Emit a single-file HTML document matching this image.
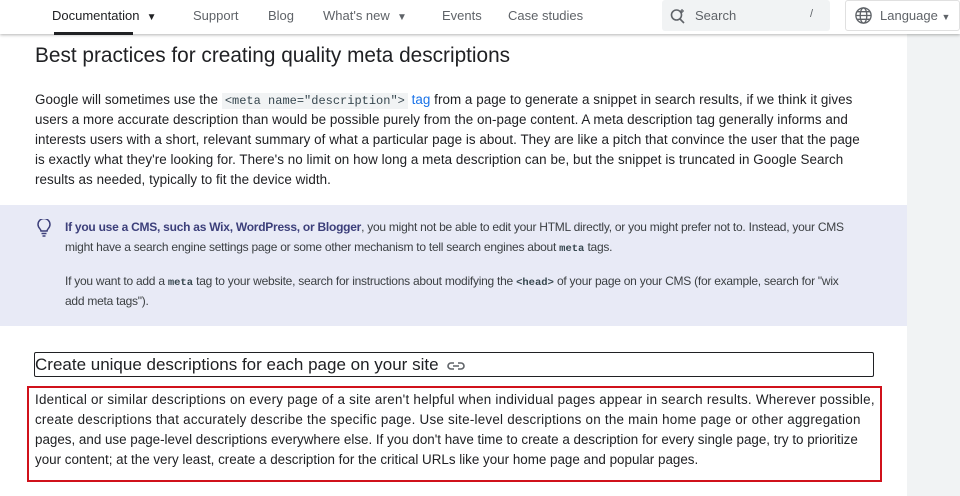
<!DOCTYPE html>
<html><head><style>
*{margin:0;padding:0;box-sizing:border-box}
body{width:960px;height:496px;overflow:hidden;background:#fff;font-family:"Liberation Sans",sans-serif;color:#202124;position:relative}
.nav{position:absolute;left:0;top:0;width:960px;height:34px;background:#fff;box-shadow:0 1px 3px rgba(0,0,0,.3);z-index:2;font-size:13px;color:#5f6368}
.nav span{position:absolute;top:8px;white-space:nowrap}
.right{position:absolute;left:907px;top:0;width:53px;height:496px;background:#f1f3f4}
.line{position:absolute;left:35px;white-space:nowrap;font-size:13.4px;letter-spacing:0.05px;color:#202124}
.bx{letter-spacing:0.24px}
code{font-family:"Liberation Mono",monospace;font-size:12px;background:#f1f3f4;color:#37474f;padding:1px 3px;letter-spacing:0}
.callout{position:absolute;left:0;top:205px;width:907px;height:121px;background:#e8eaf6}
.cl{position:absolute;left:65px;white-space:nowrap;font-size:12px;letter-spacing:-0.25px;color:#3c4043}
.cl b{color:#3c3f7a}
.cl code{background:none;font-size:10.5px;font-weight:bold;color:#37474f;padding:0}
</style></head><body>
<div class="right"></div>
<div class="nav">
<span style="left:52px;color:#202124">Documentation&nbsp; <span style="position:static;font-size:10px">▼</span></span>
<div style="position:absolute;left:54px;top:32px;width:79px;height:3px;background:#202124"></div>
<span style="left:193px">Support</span>
<span style="left:268px">Blog</span>
<span style="left:323px">What's new &nbsp;<span style="position:static;font-size:10px">▼</span></span>
<span style="left:442px">Events</span>
<span style="left:508px">Case studies</span>
<div style="position:absolute;left:662px;top:0;width:168px;height:31px;background:#f1f3f4;border-radius:3px"></div>
<svg style="position:absolute;left:669px;top:7px" width="18" height="18" viewBox="0 0 18 18" fill="none" stroke="#5f6368" stroke-width="1.6"><circle cx="7.5" cy="8" r="5"/><path d="M11 12l4 4"/><path d="M13 2v4M11 4h4" stroke-width="1.2"/></svg>
<span style="left:695px">Search</span>
<span style="left:810px;font-size:11px">/</span>
<div style="position:absolute;left:845px;top:0;width:115px;height:31px;border:1px solid #e0e0e0;border-radius:3px;background:#fff"></div>
<svg style="position:absolute;left:854px;top:6px" width="19" height="19" viewBox="0 0 20 20" fill="none" stroke="#5f6368" stroke-width="1.4"><circle cx="10" cy="10" r="8"/><ellipse cx="10" cy="10" rx="3.5" ry="8"/><path d="M2 10h16M3 6h14M3 14h14"/></svg>
<span style="left:880px">Language <span style="position:static;font-size:9px">▼</span></span>
</div>
<div style="position:absolute;left:35px;top:44px;font-size:20.8px;white-space:nowrap;letter-spacing:0">Best practices for creating quality meta descriptions</div>
<div class="line" style="top:92px">Google will sometimes use the <code>&lt;meta name="description"&gt;</code> <span style="color:#1a73e8">tag</span> from a page to generate a snippet in search results, if we think it gives</div>
<div class="line" style="top:112px">users a more accurate description than would be possible purely from the on-page content. A meta description tag generally informs and</div>
<div class="line" style="top:132px">interests users with a short, relevant summary of what a particular page is about. They are like a pitch that convince the user that the page</div>
<div class="line" style="top:152px">is exactly what they're looking for. There's no limit on how long a meta description can be, but the snippet is truncated in Google Search</div>
<div class="line" style="top:172px">results as needed, typically to fit the device width.</div>
<div class="callout"></div>
<svg style="position:absolute;left:37px;top:219px" width="14" height="18" viewBox="0 0 14 18" fill="none" stroke="#3c3f7a" stroke-width="1.5"><path d="M4 12c0-2-3-3-3-6.5a6 6 0 0112 0C13 9 10 10 10 12z"/><path d="M4.5 14.5h5M5.5 17h3"/></svg>
<div class="cl" style="top:220px"><b>If you use a CMS, such as Wix, WordPress, or Blogger</b>, you might not be able to edit your HTML directly, or you might prefer not to. Instead, your CMS</div>
<div class="cl" style="top:240px">might have a search engine settings page or some other mechanism to tell search engines about <code>meta</code> tags.</div>
<div class="cl" style="top:274px">If you want to add a <code>meta</code> tag to your website, search for instructions about modifying the <code>&lt;head&gt;</code> of your page on your CMS (for example, search for "wix</div>
<div class="cl" style="top:294px">add meta tags").</div>
<div style="position:absolute;left:34px;top:352px;width:840px;height:25px;border:1.5px solid #202124;border-radius:2px"></div>
<div style="position:absolute;left:35px;top:355px;font-size:17px;white-space:nowrap;letter-spacing:0">Create unique descriptions for each page on your site
<svg style="vertical-align:middle;margin-left:4px" width="18" height="10" viewBox="0 0 18 10" fill="none" stroke="#5f6368" stroke-width="1.6"><path d="M7 2H4a3 3 0 000 6h3M11 2h3a3 3 0 010 6h-3M6 5h6"/></svg></div>
<div style="position:absolute;left:27px;top:386px;width:855px;height:96px;border:2.5px solid #d0111b"></div>
<div class="line bx" style="top:392px">Identical or similar descriptions on every page of a site aren't helpful when individual pages appear in search results. Wherever possible,</div>
<div class="line bx" style="top:412px">create descriptions that accurately describe the specific page. Use site-level descriptions on the main home page or other aggregation</div>
<div class="line" style="top:432px;letter-spacing:0">pages, and use page-level descriptions everywhere else. If you don't have time to create a description for every single page, try to prioritize</div>
<div class="line" style="top:452px;letter-spacing:0">your content; at the very least, create a description for the critical URLs like your home page and popular pages.</div>
</body></html>
